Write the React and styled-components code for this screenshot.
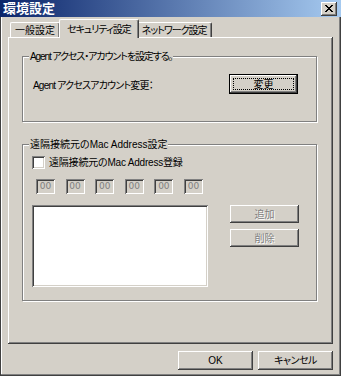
import React from 'react'
import styled, { createGlobalStyle } from 'styled-components'

const face = '#d4d0c8'
const raised = `inset -1px -1px #404040, inset 1px 1px #ffffff, inset -2px -2px #808080, inset 2px 2px ${face}`
const sunken = `inset 1px 1px #808080, inset -1px -1px #ffffff, inset 2px 2px #404040, inset -2px -2px ${face}`

const GlobalStyle = createGlobalStyle`
  html, body { margin: 0; padding: 0; background: ${face}; }
  body {
    font-family: "Liberation Sans", "Noto Sans CJK JP", sans-serif;
    font-size: 10px;
    color: #000;
  }
`

const Window = styled.div`
  width: 341px;
  height: 376px;
  box-sizing: border-box;
  background: ${face};
  box-shadow: inset -1px -1px #404040, inset 1px 1px #404040, inset -2px -2px #808080, inset 2px 2px #ffffff;
  display: flex;
  flex-direction: column;
  font-feature-settings: "palt";
`

const TitleBar = styled.div`
  height: 17px;
  display: flex;
  align-items: center;
  justify-content: space-between;
  padding: 0 4px 0 3px;
  background: linear-gradient(to right, #0a246a, #a6caf0);
`

const Title = styled.span`
  color: #fff;
  font-weight: bold;
  font-size: 13px;
  line-height: 17px;
`

const CloseButton = styled.div`
  width: 16px;
  height: 14px;
  box-sizing: border-box;
  background: ${face};
  box-shadow: ${raised};
  display: flex;
  align-items: center;
  justify-content: center;
`

const Text = styled.span`
  letter-spacing: ${p => p.$track || 0}px;
  white-space: nowrap;
`

const Body = styled.div`
  flex: 1;
  padding: 2px 8px 0 8px;
  display: flex;
  flex-direction: column;
`

const TabRow = styled.div`
  display: flex;
  align-items: flex-end;
  height: 19px;
  padding-left: 2px;
  position: relative;
  z-index: 1;
`

const Tab = styled.div`
  height: ${p => (p.$active ? 19 : 15)}px;
  margin: ${p => (p.$active ? '0 -2px 0 -1px' : '0 0 1px 0')};
  padding: 0 ${p => (p.$active ? 7 : 4)}px;
  padding-top: ${p => (p.$active ? 0 : 1)}px;
  box-sizing: border-box;
  background: ${face};
  border-left: 1px solid #fff;
  border-top: 1px solid #fff;
  border-right: 1px solid #404040;
  box-shadow: inset -1px 0 #808080;
  border-radius: 2px 2px 0 0;
  display: flex;
  align-items: center;
  white-space: nowrap;
  position: relative;
  z-index: ${p => (p.$active ? 2 : 1)};
  line-height: 13px;
`

const Panel = styled.div`
  height: 307px;
  margin-top: -1px;
  box-sizing: border-box;
  box-shadow: inset -1px -1px #404040, inset 1px 1px #ffffff, inset -2px -2px #808080;
  padding: 13px 16px 0 14px;
  display: flex;
  flex-direction: column;
`

const Group = styled.fieldset`
  margin: ${p => p.$top || 0}px 0 0 0;
  padding: ${p => p.$pad};
  border: 1px solid #808080;
  box-shadow: inset 1px 1px #fff, 1px 1px #fff;
  min-width: 0;
`

const Legend = styled.legend`
  margin-left: 6px;
  padding: 0 1px;
  line-height: 13px;
  background: ${face};
  position: relative;
`

const Row = styled.div`
  display: flex;
  align-items: center;
  justify-content: space-between;
  padding-left: 10px;
  padding-right: 18px;
`

const Button = styled.div`
  width: ${p => p.$w || 69}px;
  height: ${p => p.$h || 19}px;
  box-sizing: border-box;
  background: ${face};
  box-shadow: ${raised};
  display: flex;
  align-items: center;
  justify-content: center;
  color: ${p => (p.$disabled ? '#808080' : '#000')};
  text-shadow: ${p => (p.$disabled ? '1px 1px #fff' : 'none')};
  line-height: 13px;
`

const DefaultButton = styled(Button)`
  border: 1px solid #000;
  box-shadow: inset -1px -1px #404040, inset 1px 1px #ffffff, inset -2px -2px #808080;
  position: relative;
  &::after {
    content: "";
    position: absolute;
    inset: 3px;
    border: 1px dotted #000;
  }
`

const CheckRow = styled.label`
  display: flex;
  align-items: center;
  gap: 4px;
  padding-left: 9px;
  height: 13px;
  line-height: 13px;
`

const CheckBox = styled.span`
  width: 13px;
  height: 13px;
  box-sizing: border-box;
  background: #fff;
  box-shadow: ${sunken};
`

const MacRow = styled.div`
  display: flex;
  gap: 10.6px;
  padding-left: 13px;
  margin-top: 10px;
`

const MacField = styled.div`
  width: 19px;
  height: 15px;
  box-sizing: border-box;
  box-shadow: ${sunken};
  color: #808080;
  font-size: 9px;
  line-height: 15px;
  text-align: center;
  font-family: "DejaVu Sans", sans-serif;
`

const ListArea = styled.div`
  display: flex;
  gap: 22px;
  padding-left: 9px;
  margin-top: 11px;
`

const ListBox = styled.div`
  width: 176px;
  height: 82px;
  box-sizing: border-box;
  background: #fff;
  box-shadow: ${sunken};
`

const ButtonColumn = styled.div`
  display: flex;
  flex-direction: column;
  gap: 6px;
`

const Footer = styled.div`
  display: flex;
  justify-content: flex-end;
  gap: 5px;
  margin-top: 7px;
`

export default function App() {
  return (
    <>
      <GlobalStyle />
      <Window>
        <TitleBar>
          <Title>環境設定</Title>
          <CloseButton>
            <svg width="8" height="7" viewBox="0 0 8 7" shapeRendering="crispEdges">
              <path d="M0 0h2v1h1v1h2V1h1V0h2v1H7v1H6v1H5v1h1v1h1v1h1v1H6V6H5V5H3v1H2v1H0V6h1V5h1V4h1V3H2V2H1V1H0z" fill="#000" />
            </svg>
          </CloseButton>
        </TitleBar>
        <Body>
          <TabRow>
            <Tab><Text>一般設定</Text></Tab>
            <Tab $active><Text $track={-1}>セキュリティ設定</Text></Tab>
            <Tab><Text $track={-1}>ネットワーク設定</Text></Tab>
          </TabRow>
          <Panel>
            <Group $pad="11px 0 27px 0">
              <Legend><Text $track={-1.1}>Agent アクセス・アカウントを設定する。</Text></Legend>
              <Row>
                <Text $track={-0.8}>Agent アクセスアカウント変更：</Text>
                <DefaultButton $w={69} $h={20}>変更</DefaultButton>
              </Row>
            </Group>
            <Group $top={16} $pad="5px 0 13px 0">
              <Legend><Text>遠隔接続元のMac Address設定</Text></Legend>
              <CheckRow>
                <CheckBox />
                <Text $track={-0.2}>遠隔接続元のMac Address登録</Text>
              </CheckRow>
              <MacRow>
                {['00', '00', '00', '00', '00', '00'].map((v, i) => (
                  <MacField key={i}>{v}</MacField>
                ))}
              </MacRow>
              <ListArea>
                <ListBox />
                <ButtonColumn>
                  <Button $disabled $h={18}>追加</Button>
                  <Button $disabled $h={18}>削除</Button>
                </ButtonColumn>
              </ListArea>
            </Group>
          </Panel>
          <Footer>
            <Button $w={75} $h={19}>OK</Button>
            <Button $w={75} $h={19}><Text $track={-0.5}>キャンセル</Text></Button>
          </Footer>
        </Body>
      </Window>
    </>
  )
}
